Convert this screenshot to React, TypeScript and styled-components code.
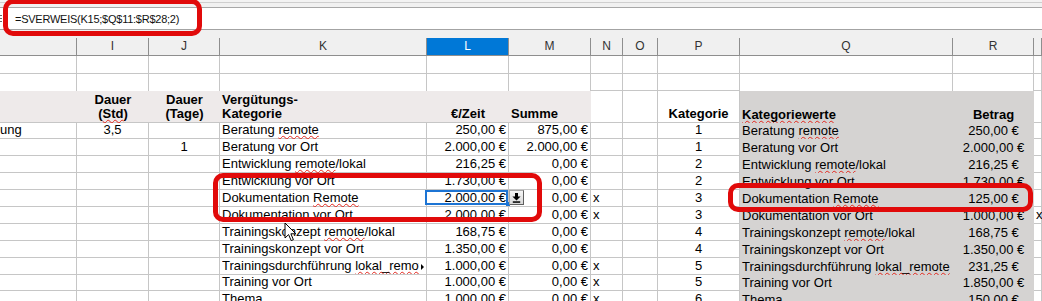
import React from 'react';
import styled, { createGlobalStyle } from 'styled-components';

const GlobalStyle = createGlobalStyle`
  *, *::before, *::after { box-sizing: border-box; }
  html, body { margin: 0; padding: 0; background: #fff; }
  body { font-family: "Liberation Sans", Arial, sans-serif; color: #000; }
`;

const COLS = [77, 72, 71, 207, 82, 82, 32, 35, 82, 213, 81];
const gridCols = COLS.map((w) => `${w}px`).join(' ') + ' 1fr';

const Page = styled.div`
  position: relative;
  width: 1042px;
  height: 301px;
  overflow: hidden;
  background: #fff;
`;

const TopStrip = styled.div`
  height: 8px;
  background: linear-gradient(#f3f3f3 0 2px, #cfcfcf 2px 3px, #f1f1f1 3px);
  border-bottom: 1px solid #a8a8a8;
`;

const FormulaBar = styled.div`
  height: 22px;
  display: flex;
  align-items: center;
  background: #fff;
  border-bottom: 1px solid #a3a3a3;
`;

const FormulaStub = styled.span`
  width: 2px;
  height: 7px;
  margin-right: 13px;
  background: repeating-linear-gradient(#6b6b6b 0 1px, transparent 1px 3px);
`;

const FormulaText = styled.span`
  font-size: 11px;
  letter-spacing: -0.25px;
  color: #111;
  padding-top: 1px;
`;

const HeaderGap = styled.div`
  height: 8px;
  background: #f0f0f0;
`;

const Sheet = styled.div`
  display: grid;
  grid-template-columns: ${gridCols};
  grid-template-rows: 18px 18px 17px 31.5px repeat(11, 16.9px);
`;

const ColHead = styled.div<{ $active?: boolean }>`
  background: ${(p) => (p.$active ? '#0078d7' : '#f0f0f0')};
  color: ${(p) => (p.$active ? '#fff' : '#333')};
  border-right: 1px solid #8e8e8e;
  border-bottom: 1px solid #8e8e8e;
  font-size: 12px;
  line-height: 17px;
  text-align: center;
`;

type Align = 'l' | 'c' | 'r';
type Tone = 'plain' | 'shade' | 'block';

const alignMap: Record<Align, string> = { l: 'flex-start', c: 'center', r: 'flex-end' };
const bgMap: Record<Tone, string> = { plain: '#fff', shade: '#eeeaea', block: '#d5d3d2' };

const Cell = styled.div<{ $align?: Align; $tone?: Tone; $bold?: boolean; $noBottom?: boolean; $pad?: number }>`
  position: relative;
  display: flex;
  flex-direction: column;
  justify-content: flex-end;
  align-items: ${(p) => alignMap[p.$align ?? 'l']};
  text-align: ${(p) => (p.$align === 'c' ? 'center' : p.$align === 'r' ? 'right' : 'left')};
  padding: 0 ${(p) => p.$pad ?? 2}px;
  min-width: 0;
  white-space: nowrap;
  font-size: 13px;
  line-height: 16px;
  font-weight: ${(p) => (p.$bold ? 'bold' : 'normal')};
  background: ${(p) => bgMap[p.$tone ?? 'plain']};
  border-right: ${(p) => ((p.$tone ?? 'plain') === 'plain' ? '1px solid #c6c6c6' : 'none')};
  border-bottom: ${(p) =>
    p.$noBottom || p.$tone === 'block' ? 'none' : '1px solid #c6c6c6'};
`;

const HeadText = styled.span`
  display: block;
  line-height: 14px;
  padding-bottom: 1px;
`;

const Spell = styled.span`
  text-decoration-line: underline;
  text-decoration-style: wavy;
  text-decoration-color: #e3261c;
  text-decoration-thickness: 1px;
  text-underline-offset: 1px;
  text-decoration-skip-ink: none;
`;

const ClipText = styled.span`
  display: block;
  max-width: 197px;
  overflow: hidden;
`;

const ClipMark = styled.span`
  position: absolute;
  right: 2px;
  top: 6px;
  width: 0;
  height: 0;
  border-left: 3px solid #000;
  border-top: 3px solid transparent;
  border-bottom: 3px solid transparent;
`;

const Selection = styled.span`
  position: absolute;
  z-index: 2;
  left: -2px;
  right: 0;
  top: 0;
  bottom: 1px;
  border: 2px solid #1c74d4;
  pointer-events: none;
`;

const Handle = styled.span`
  position: absolute;
  z-index: 3;
  right: -2px;
  bottom: 0;
  width: 4px;
  height: 4px;
  background: #1c74d4;
`;

const DropButton = styled.span`
  position: absolute;
  z-index: 3;
  left: calc(100% + 1px);
  top: 0;
  width: 15px;
  height: 15px;
  display: flex;
  align-items: center;
  justify-content: center;
  background: linear-gradient(#f6f6f6, #d8d8d8);
  border: 1px solid;
  border-color: #a9a9a9 #5f5f5f #5f5f5f #a9a9a9;
`;

const RedFrame = styled.div<{ $l: number; $t: number; $w: number; $h: number }>`
  position: absolute;
  z-index: 5;
  left: ${(p) => p.$l}px;
  top: ${(p) => p.$t}px;
  width: ${(p) => p.$w}px;
  height: ${(p) => p.$h}px;
  border: 5px solid #e10a0a;
  border-radius: 10px;
  pointer-events: none;
`;

const Cursor = styled.svg`
  position: absolute;
  z-index: 6;
  left: 284px;
  top: 222px;
`;

type Seg = string | { u: string };
type DataRow = {
  h?: string;
  i?: string;
  j?: string;
  cat: Seg[];
  l: string;
  m: string;
  n?: string;
  p: string;
  r: string;
  s?: string;
  clip?: boolean;
  sel?: boolean;
};

const rows: DataRow[] = [
  { h: 'ung', i: '3,5', cat: ['Beratung ', { u: 'remote' }], l: '250,00 €', m: '875,00 €', p: '1', r: '250,00 €' },
  { j: '1', cat: ['Beratung vor Ort'], l: '2.000,00 €', m: '2.000,00 €', p: '1', r: '2.000,00 €' },
  { cat: ['Entwicklung ', { u: 'remote' }, '/lokal'], l: '216,25 €', m: '0,00 €', p: '2', r: '216,25 €' },
  { cat: ['Entwicklung vor Ort'], l: '1.730,00 €', m: '0,00 €', p: '2', r: '1.730,00 €' },
  { cat: ['Dokumentation ', { u: 'Remote' }], l: '2.000,00 €', sel: true, m: '0,00 €', n: 'x', p: '3', r: '125,00 €' },
  { cat: ['Dokumentation vor Ort'], l: '2.000,00 €', m: '0,00 €', n: 'x', p: '3', r: '1.000,00 €', s: 'x' },
  { cat: ['Trainingskonzept ', { u: 'remote' }, '/lokal'], l: '168,75 €', m: '0,00 €', p: '4', r: '168,75 €' },
  { cat: ['Trainingskonzept vor Ort'], l: '1.350,00 €', m: '0,00 €', p: '4', r: '1.350,00 €' },
  { cat: ['Trainingsdurchführung ', { u: 'lokal_remote' }], clip: true, l: '1.000,00 €', m: '0,00 €', n: 'x', p: '5', r: '231,25 €' },
  { cat: ['Training vor Ort'], l: '1.000,00 €', m: '0,00 €', n: 'x', p: '5', r: '1.850,00 €' },
  { cat: ['Thema'], l: '1.000,00 €', m: '0,00 €', n: 'x', p: '6', r: '150,00 €' },
];

const letters = ['', 'I', 'J', 'K', 'L', 'M', 'N', 'O', 'P', 'Q', 'R', ''];

function Segs({ segs }: { segs: Seg[] }) {
  return (
    <>
      {segs.map((s, i) => (typeof s === 'string' ? <React.Fragment key={i}>{s}</React.Fragment> : <Spell key={i}>{s.u}</Spell>))}
    </>
  );
}

function EmptyRow({ last }: { last?: boolean }) {
  return (
    <>
      {letters.map((_, c) => (
        <Cell key={c} $noBottom={last && (c <= 5 || c === 9 || c === 10)} />
      ))}
    </>
  );
}

function DropIcon() {
  return (
    <svg width="9" height="10" viewBox="0 0 9 10">
      <path d="M3 0H6V3.6H8.6L4.5 7.6L0.4 3.6H3Z" fill="#000" />
      <rect x="0.8" y="8.3" width="7.4" height="1.5" fill="#000" />
    </svg>
  );
}

export default function App() {
  return (
    <Page>
      <GlobalStyle />
      <TopStrip />
      <FormulaBar>
        <FormulaStub />
        <FormulaText>=SVERWEIS(K15;$Q$11:$R$28;2)</FormulaText>
      </FormulaBar>
      <HeaderGap />
      <Sheet>
        {letters.map((l, c) => (
          <ColHead key={c} $active={l === 'L'}>
            {l}
          </ColHead>
        ))}
        <EmptyRow />
        <EmptyRow last />

        <Cell $tone="shade" />
        <Cell $tone="shade" $bold $align="c">
          <HeadText>
            Dauer
            <br />(<Spell>Std</Spell>)
          </HeadText>
        </Cell>
        <Cell $tone="shade" $bold $align="c">
          <HeadText>
            Dauer
            <br />
            (Tage)
          </HeadText>
        </Cell>
        <Cell $tone="shade" $bold>
          <HeadText>
            Vergütungs-
            <br />
            Kategorie
          </HeadText>
        </Cell>
        <Cell $tone="shade" $bold $align="c">
          <HeadText>€/Zeit</HeadText>
        </Cell>
        <Cell $tone="shade" $bold>
          <HeadText>Summe</HeadText>
        </Cell>
        <Cell />
        <Cell />
        <Cell $bold $align="c">
          <HeadText>Kategorie</HeadText>
        </Cell>
        <Cell $tone="block" $bold>
          <HeadText>
            <Spell>Kategoriewerte</Spell>
          </HeadText>
        </Cell>
        <Cell $tone="block" $bold $align="c">
          <HeadText>Betrag</HeadText>
        </Cell>
        <Cell />

        {rows.map((r, idx) => (
          <React.Fragment key={idx}>
            <Cell $pad={0}>{r.h}</Cell>
            <Cell $align="c">{r.i}</Cell>
            <Cell $align="c">{r.j}</Cell>
            <Cell>
              {r.clip ? (
                <>
                  <ClipText>
                    <Segs segs={r.cat} />
                  </ClipText>
                  <ClipMark />
                </>
              ) : (
                <span>
                  <Segs segs={r.cat} />
                </span>
              )}
            </Cell>
            <Cell $align="r">
              {r.l}
              {r.sel && (
                <>
                  <Selection />
                  <Handle />
                  <DropButton>
                    <DropIcon />
                  </DropButton>
                </>
              )}
            </Cell>
            <Cell $align="r">{r.m}</Cell>
            <Cell>{r.n}</Cell>
            <Cell />
            <Cell $align="c">{r.p}</Cell>
            <Cell $tone="block">
              <span>
                <Segs segs={r.cat} />
              </span>
            </Cell>
            <Cell $tone="block" $align="c">
              {r.r}
            </Cell>
            <Cell>{r.s}</Cell>
          </React.Fragment>
        ))}
      </Sheet>

      <RedFrame $l={3} $t={-1} $w={199} $h={37} />
      <RedFrame $l={213} $t={173} $w={329} $h={49} />
      <RedFrame $l={728} $t={183} $w={305} $h={29} />

      <Cursor width="13" height="20" viewBox="0 0 13 20">
        <path d="M1 1V16L4.6 12.6L7.2 18.6L9.4 17.7L6.9 11.8H11.8Z" fill="#fff" stroke="#000" strokeWidth="1" strokeLinejoin="round" />
      </Cursor>
    </Page>
  );
}
